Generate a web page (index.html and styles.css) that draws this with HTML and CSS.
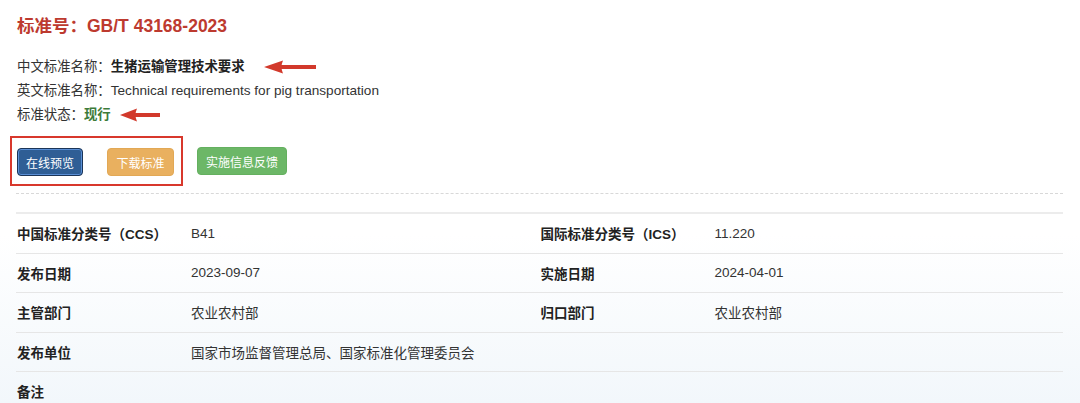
FILE: index.html
```html
<!DOCTYPE html>
<html lang="zh-CN">
<head>
<meta charset="utf-8">
<title>GB/T 43168-2023</title>
<link rel="stylesheet" href="styles.css">
</head>
<body>
<div class="page">
  <h1 class="title">标准号：GB/T 43168-2023</h1>
  <div class="info">
    <div class="info-line">中文标准名称：<b class="cn-name">生猪运输管理技术要求</b><svg class="arrow arrow-long" width="52" height="14" viewBox="0 0 52 14"><path d="M0 7 L19 0.5 Q16 7 19 13.5 Z" fill="#d2392b"/><rect x="17" y="5" width="35" height="4" fill="#d2392b"/></svg></div>
    <div class="info-line">英文标准名称：<span class="en-name">Technical requirements for pig transportation</span></div>
    <div class="info-line">标准状态：<b class="status">现行</b><svg class="arrow arrow-short" width="40" height="14" viewBox="0 0 40 14"><path d="M0 7 L17 0.5 Q14 7 17 13.5 Z" fill="#d2392b"/><rect x="15" y="5" width="25" height="4" fill="#d2392b"/></svg></div>
  </div>
  <div class="actions">
    <div class="highlight">
      <a class="btn btn-blue">在线预览</a>
      <a class="btn btn-orange">下载标准</a>
    </div>
    <a class="btn btn-green">实施信息反馈</a>
  </div>
  <div class="dash"></div>
  <div class="table">
    <div class="cell label">中国标准分类号（CCS）</div>
    <div class="cell value">B41</div>
    <div class="cell label">国际标准分类号（ICS）</div>
    <div class="cell value">11.220</div>

    <div class="cell label">发布日期</div>
    <div class="cell value">2023-09-07</div>
    <div class="cell label">实施日期</div>
    <div class="cell value">2024-04-01</div>

    <div class="cell label">主管部门</div>
    <div class="cell value">农业农村部</div>
    <div class="cell label">归口部门</div>
    <div class="cell value">农业农村部</div>

    <div class="cell label">发布单位</div>
    <div class="cell value wide">国家市场监督管理总局、国家标准化管理委员会</div>

    <div class="cell label">备注</div>
    <div class="cell value wide"></div>
  </div>
</div>
</body>
</html>
```

FILE: styles.css
```css
html, body {
  margin: 0;
  padding: 0;
}
body {
  width: 1080px;
  height: 403px;
  overflow: hidden;
  font-family: "Liberation Sans", Arial, "Noto Sans CJK SC", sans-serif;
  color: #333;
  background: linear-gradient(to bottom, #ffffff 0, #ffffff 235px, #f2f7fb 403px);
}
.page {
  padding: 14px 17px 0 16px;
}
.title {
  margin: 0 0 0 1px;
  font-size: 17.5px;
  line-height: 24px;
  font-weight: bold;
  color: #bd3a2f;
}
.info {
  margin-top: 17px;
  margin-left: 1px;
}
.info-line {
  font-size: 13.4px;
  line-height: 24px;
  height: 24px;
  display: flex;
  align-items: center;
  color: #333;
  white-space: nowrap;
}
.cn-name {
  color: #222;
  font-weight: bold;
  font-size: 13.4px;
}
.en-name {
  font-size: 13.6px;
  color: #333;
}
.status {
  color: #3d7b3a;
  font-weight: bold;
}
.arrow {
  display: block;
}
.arrow-long {
  margin-left: 19px;
}
.arrow-short {
  margin-left: 9px;
}
.actions {
  margin-top: 9px;
  display: flex;
  align-items: center;
}
.highlight {
  margin-left: -6px;
  border: 2px solid #d8382c;
  padding: 10px 7px 8px 5px;
  display: flex;
  gap: 24px;
}
.btn {
  display: inline-flex;
  align-items: center;
  justify-content: center;
  box-sizing: border-box;
  height: 28px;
  padding: 0 8px;
  font-size: 12px;
  color: #fff;
  border-radius: 4px;
  white-space: nowrap;
  cursor: pointer;
}
.btn-blue {
  background: #2f5e95;
  border: 1px solid #1b3558;
  box-shadow: inset 0 0 0 1px #5a8fd6;
  min-width: 66px;
}
.btn-orange {
  background: #e9b05f;
  border: 1px solid #e2a855;
  min-width: 67px;
}
.btn-green {
  margin-left: 14px;
  background: #6cb767;
  border: 1px solid #64b05f;
  min-width: 90px;
}
.dash {
  margin-top: 7px;
  border-top: 1px dashed #d8d8d8;
}
.table {
  margin-top: 18px;
  border-top: 2px solid #ececec;
  display: grid;
  grid-template-columns: 174px 1fr 174px 1fr;
}
.cell {
  box-sizing: border-box;
  height: 39.5px;
  padding-left: 1px;
  border-bottom: 1px solid #e6e6e6;
  display: flex;
  align-items: center;
  font-size: 13.5px;
  color: #333;
  white-space: nowrap;
}
.label {
  font-weight: bold;
  color: #222;
}
.wide {
  grid-column: span 3;
}
```
